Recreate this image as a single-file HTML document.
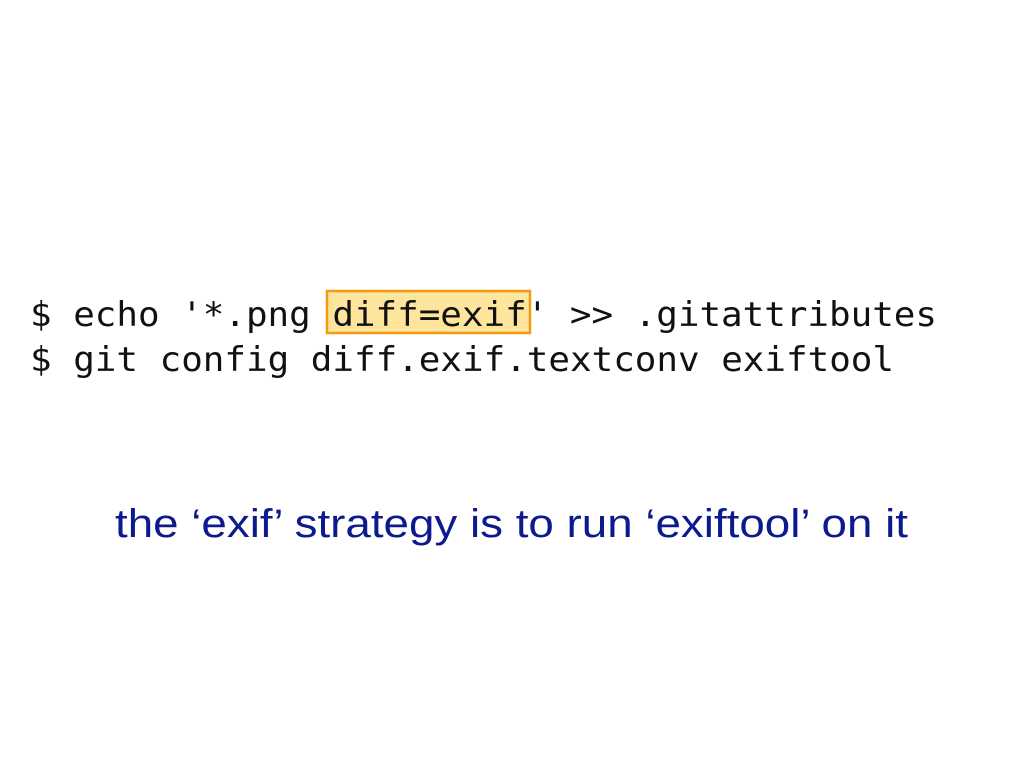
<!DOCTYPE html>
<html><head><meta charset="utf-8"><style>
html,body{margin:0;padding:0;background:#fff;width:1024px;height:768px;overflow:hidden}
</style></head><body>
<svg width="1024" height="768" xmlns="http://www.w3.org/2000/svg">
<rect x="327" y="291" width="203" height="42" fill="#fde59b" stroke="#f39a12" stroke-width="2.5"/>
<g font-family="DejaVu Sans Mono, Liberation Mono, monospace" font-size="34" fill="#111">
<text x="30" y="326" textLength="907" lengthAdjust="spacingAndGlyphs">$ echo '*.png diff=exif' &gt;&gt; .gitattributes</text>
<text x="30" y="371" textLength="864" lengthAdjust="spacingAndGlyphs">$ git config diff.exif.textconv exiftool</text>
</g>
<text x="115" y="537" font-family="Liberation Sans, sans-serif" font-size="40" fill="#0c1a8e" textLength="793" lengthAdjust="spacingAndGlyphs">the ‘exif’ strategy is to run ‘exiftool’ on it</text>
</svg>
</body></html>
